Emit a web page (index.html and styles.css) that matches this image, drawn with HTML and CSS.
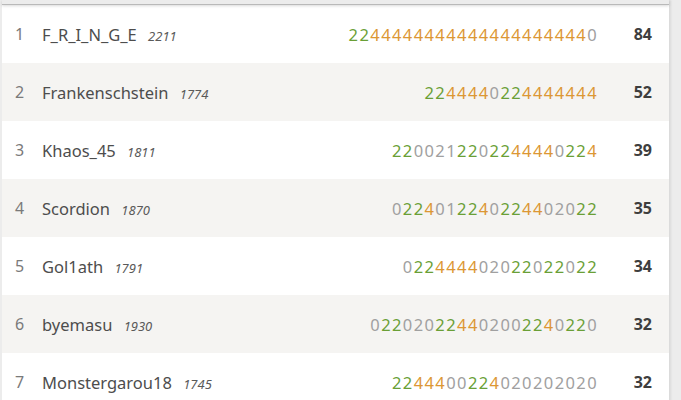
FILE: index.html
```html
<!DOCTYPE html>
<html lang="en">
<head>
    <meta charset="UTF-8">
    <meta name="viewport" content="width=device-width, initial-scale=1.0">
    <title>Arena standings</title>
    <link rel="stylesheet" href="styles.css">
</head>
<body>
    <div class="standings">
        <div class="standings-top"></div>
        <table class="slist">
            <tbody>
                <tr>
                    <td class="rank">1</td>
                    <td class="player">F_R_I_N_G_E <em>2211</em></td>
                    <td class="sheet"><s class="w">2</s><s class="w">2</s><s class="d">4</s><s class="d">4</s><s class="d">4</s><s class="d">4</s><s class="d">4</s><s class="d">4</s><s class="d">4</s><s class="d">4</s><s class="d">4</s><s class="d">4</s><s class="d">4</s><s class="d">4</s><s class="d">4</s><s class="d">4</s><s class="d">4</s><s class="d">4</s><s class="d">4</s><s class="d">4</s><s class="d">4</s><s class="d">4</s><s>0</s></td>
                    <td class="total">84</td>
                </tr>
                <tr>
                    <td class="rank">2</td>
                    <td class="player">Frankenschstein <em>1774</em></td>
                    <td class="sheet"><s class="w">2</s><s class="w">2</s><s class="d">4</s><s class="d">4</s><s class="d">4</s><s class="d">4</s><s>0</s><s class="w">2</s><s class="w">2</s><s class="d">4</s><s class="d">4</s><s class="d">4</s><s class="d">4</s><s class="d">4</s><s class="d">4</s><s class="d">4</s></td>
                    <td class="total">52</td>
                </tr>
                <tr>
                    <td class="rank">3</td>
                    <td class="player">Khaos_45 <em>1811</em></td>
                    <td class="sheet"><s class="w">2</s><s class="w">2</s><s>0</s><s>0</s><s>2</s><s>1</s><s class="w">2</s><s class="w">2</s><s>0</s><s class="w">2</s><s class="w">2</s><s class="d">4</s><s class="d">4</s><s class="d">4</s><s class="d">4</s><s>0</s><s class="w">2</s><s class="w">2</s><s class="d">4</s></td>
                    <td class="total">39</td>
                </tr>
                <tr>
                    <td class="rank">4</td>
                    <td class="player">Scordion <em>1870</em></td>
                    <td class="sheet"><s>0</s><s class="w">2</s><s class="w">2</s><s class="d">4</s><s>0</s><s>1</s><s class="w">2</s><s class="w">2</s><s class="d">4</s><s>0</s><s class="w">2</s><s class="w">2</s><s class="d">4</s><s class="d">4</s><s>0</s><s>2</s><s>0</s><s class="w">2</s><s class="w">2</s></td>
                    <td class="total">35</td>
                </tr>
                <tr>
                    <td class="rank">5</td>
                    <td class="player">Gol1ath <em>1791</em></td>
                    <td class="sheet"><s>0</s><s class="w">2</s><s class="w">2</s><s class="d">4</s><s class="d">4</s><s class="d">4</s><s class="d">4</s><s>0</s><s>2</s><s>0</s><s class="w">2</s><s class="w">2</s><s>0</s><s class="w">2</s><s class="w">2</s><s>0</s><s class="w">2</s><s class="w">2</s></td>
                    <td class="total">34</td>
                </tr>
                <tr>
                    <td class="rank">6</td>
                    <td class="player">byemasu <em>1930</em></td>
                    <td class="sheet"><s>0</s><s class="w">2</s><s class="w">2</s><s>0</s><s>2</s><s>0</s><s class="w">2</s><s class="w">2</s><s class="d">4</s><s class="d">4</s><s>0</s><s>2</s><s>0</s><s>0</s><s class="w">2</s><s class="w">2</s><s class="d">4</s><s>0</s><s class="w">2</s><s class="w">2</s><s>0</s></td>
                    <td class="total">32</td>
                </tr>
                <tr>
                    <td class="rank">7</td>
                    <td class="player">Monstergarou18 <em>1745</em></td>
                    <td class="sheet"><s class="w">2</s><s class="w">2</s><s class="d">4</s><s class="d">4</s><s class="d">4</s><s>0</s><s>0</s><s class="w">2</s><s class="w">2</s><s class="d">4</s><s>0</s><s>2</s><s>0</s><s>2</s><s>0</s><s>2</s><s>0</s><s>2</s><s>0</s></td>
                    <td class="total">32</td>
                </tr>
            </tbody>
        </table>
    </div>
</body>
</html>
```

FILE: styles.css
```css
body {
    margin: 0;
    background: #ececec;
    font-family: 'Noto Sans', 'Open Sans', sans-serif;
    color: #4d4d4d;
    overflow: hidden;
}
.standings {
    margin-left: 2px;
    width: 667px;
    background: #fff;
    box-shadow: 2px 0 2px rgba(0, 0, 0, 0.08);
    position: relative;
}
.standings-top {
    height: 4px;
    background: #ececec;
    border-bottom: 1px solid #b9b9b9;
    box-shadow: 0 1px 3px rgba(0, 0, 0, 0.15);
    position: relative;
}
.slist {
    width: 100%;
    border-collapse: collapse;
    table-layout: fixed;
}
.slist tr {
    height: 58px;
}
.slist tr:nth-child(even) {
    background: #f5f4f2;
}
.slist td {
    padding: 0;
    vertical-align: middle;
    white-space: nowrap;
}
.rank {
    width: 27px;
    padding-left: 13px !important;
    font-size: 16px;
    color: #7a7a7a;
}
.player {
    width: 260px;
    font-size: 16.5px;
    color: #4d4d4d;
}
.player em {
    font-size: 13px;
    font-style: italic;
    color: #5a5a5a;
    margin-left: 7px;
}
.sheet {
    text-align: right;
    font-size: 16.5px;
    letter-spacing: 1.4px;
}
.sheet s {
    text-decoration: none;
    color: #a0a0a0;
}
.sheet s.w {
    color: #6a9f36;
}
.sheet s.d {
    color: #dc9734;
}
.total {
    width: 54px;
    text-align: right;
    padding-right: 17px !important;
    font-size: 16px;
    font-weight: bold;
    color: #3e3e3e;
}
```
